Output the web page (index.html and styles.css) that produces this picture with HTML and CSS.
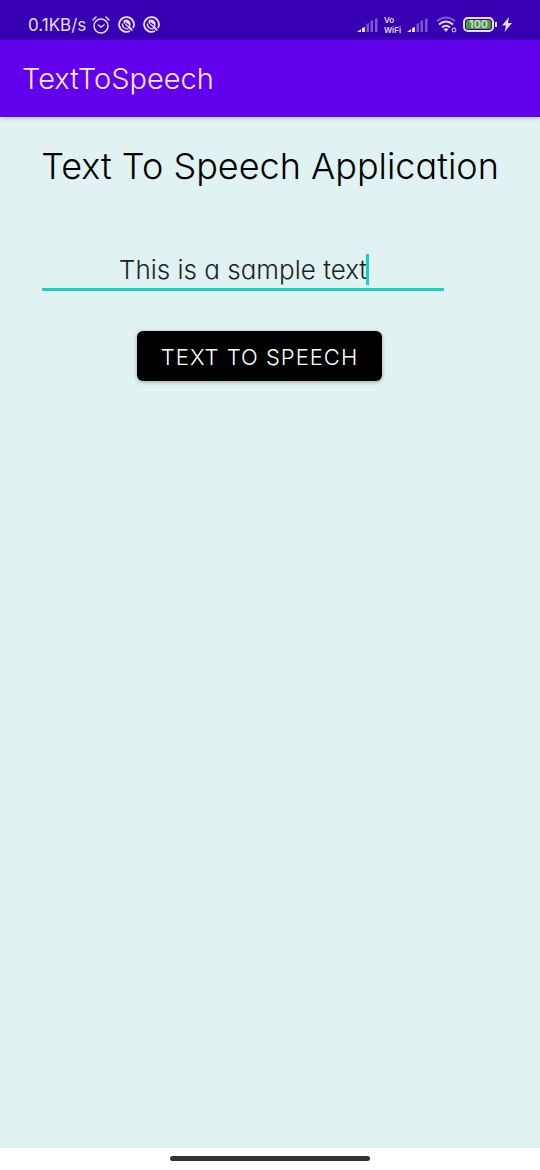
FILE: index.html
```html
<!DOCTYPE html>
<html lang="en">
<head>
<meta charset="utf-8">
<meta name="viewport" content="width=device-width, initial-scale=1">
<title>TextToSpeech</title>
<link rel="stylesheet" href="styles.css">
</head>
<body>
<div class="screen">
  <div class="status-bar">
    <div class="status-group">
      <span class="net-speed">0.1KB/s</span>
      <svg class="icon-alarm" width="18" height="18" viewBox="0 0 18 18" fill="none" stroke="currentColor" stroke-width="1.5" stroke-linecap="round"><circle cx="9" cy="10" r="7"/><path d="M1 4l3-3M17 4l-3-3M6.5 9L9 11l3-2"/></svg>
      <svg class="icon-app" width="17" height="17" viewBox="0 0 17 17" fill="none" stroke="currentColor"><path d="M12 15A7.400 7.400 0 1 1 15 12" stroke-width="1.800"/><path d="M5.500 4.500Q8.500 2.500 11.500 5Q13.500 8 12 10.500L15 14L13.500 15L5.500 7Z" fill="currentColor" stroke="none"/><path d="M4.500 7.500Q4 10.500 6.500 12T10.500 12.500" stroke-width="1.400"/><path d="M7 6.500L11 9.500" stroke="#3700b3" stroke-width="1.200"/></svg>
      <svg class="icon-app" width="17" height="17" viewBox="0 0 17 17" fill="none" stroke="currentColor"><path d="M12 15A7.400 7.400 0 1 1 15 12" stroke-width="1.800"/><path d="M5.500 4.500Q8.500 2.500 11.500 5Q13.500 8 12 10.500L15 14L13.500 15L5.500 7Z" fill="currentColor" stroke="none"/><path d="M4.500 7.500Q4 10.500 6.500 12T10.500 12.500" stroke-width="1.400"/><path d="M7 6.500L11 9.500" stroke="#3700b3" stroke-width="1.200"/></svg>
    </div>
    <div class="status-group status-right">
      <svg width="21" height="16" viewBox="0 0 21 16" fill="currentColor"><path d="M0 15l4-3v3zM5 11l3-1v5H5z"/><path opacity=".4" d="M9.500 7l2.500-1v9H9.500zM13.500 4L16 3v12h-2.500zM18 2l2.500-1v14H18z"/></svg>
      <span class="vowifi"><span>Vo</span><span>WiFi</span></span>
      <svg width="21" height="16" viewBox="0 0 21 16" fill="currentColor"><path d="M0 15l4-3v3zM5 11l3-1v5H5z"/><path opacity=".4" d="M9.500 7l2.500-1v9H9.500zM13.500 4L16 3v12h-2.500zM18 2l2.500-1v14H18z"/></svg>
      <svg class="icon-wifi" width="21" height="17" viewBox="0 0 21 17" fill="none" stroke="currentColor" stroke-width="2"><path opacity=".4" d="M1 5Q10 -2 19 5"/><path d="M3 8.500Q10 2.500 17 8.500M6 11.500Q10 8 14 11.500"/><path d="M7.500 13Q10 11.500 12.500 13L10 16Z" fill="currentColor" stroke="none"/><circle cx="18" cy="14" r="1.800" stroke-width="1.200" opacity=".8"/></svg>
      <span class="battery"><span class="battery-level">100</span></span>
      <svg class="icon-bolt" width="10" height="15" viewBox="0 0 10 15" fill="currentColor"><path d="M7 0L0 8.500h4L2.500 15L10 6H6z"/></svg>
    </div>
  </div>
  <header class="app-bar">TextToSpeech</header>
  <main class="content">
    <h1 class="title">Text To Speech Application</h1>
    <div class="field">
      <input class="field-input" type="text" value="This is a sample text" aria-label="Text to speak">
      <span class="caret"></span>
    </div>
    <button class="speak-button" type="button">TEXT TO SPEECH</button>
  </main>
  <div class="nav-bar"><div class="nav-handle"></div></div>
</div>
</body>
</html>
```
FILE: styles.css
```css
* {
  box-sizing: border-box;
}

body {
  margin: 0;
  font-family: Inter, "Noto Sans", sans-serif;
  font-weight: 300;
  font-feature-settings: "cv11";
}

.screen {
  display: flex;
  flex-direction: column;
  min-height: 100vh;
  background: #e0f2f1;
}

.status-bar {
  display: flex;
  justify-content: space-between;
  align-items: center;
  height: 40px;
  padding: 9px 28px 0;
  background: #3700b3;
  color: #e9dcff;
}

.status-group {
  display: flex;
  align-items: center;
  gap: 8px;
}

.net-speed {
  font-size: 17px;
  line-height: 20px;
  font-weight: 400;
  margin-right: -2px;
}

.status-right {
  gap: 6px;
}

.vowifi {
  display: flex;
  flex-direction: column;
  font-size: 8px;
  line-height: 10px;
  font-weight: 600;
}

.icon-wifi {
  margin-left: 2px;
}

.battery {
  position: relative;
  width: 31px;
  height: 15px;
  margin-right: 2px;
  padding: 1px;
  border: 2px solid #e9dcff;
  border-radius: 5px;
}

.battery::after {
  content: "";
  position: absolute;
  top: 3px;
  right: -5px;
  width: 2px;
  height: 5px;
  background: #e9dcff;
}

.battery-level {
  display: block;
  height: 9px;
  border-radius: 2px;
  background: #43a02d;
  font-size: 11px;
  line-height: 9px;
  font-weight: 500;
  text-align: center;
}

.app-bar {
  position: relative;
  padding: 22px;
  background: #6200ee;
  color: #f3eaff;
  font-size: 29px;
  line-height: 33px;
  box-shadow: 0 1px 5px rgba(0, 0, 0, 0.2);
}

.content {
  display: flex;
  flex: 1;
  flex-direction: column;
  align-items: center;
  padding: 28px 20px;
}

.title {
  margin: 0;
  color: #000;
  font-size: 36px;
  line-height: 42px;
  font-weight: 300;
  white-space: nowrap;
}

.field {
  position: relative;
  align-self: stretch;
  margin: 62px 76px 0 22px;
}

.field-input {
  display: block;
  width: 100%;
  height: 42px;
  padding: 2px 0 0;
  border: 0;
  border-bottom: 3px solid #16d1bf;
  outline: 0;
  background: transparent;
  color: #1b2424;
  font: inherit;
  font-feature-settings: inherit;
  font-size: 26px;
  text-align: center;
}

.caret {
  position: absolute;
  top: 5px;
  left: calc(50% + 123px);
  width: 3px;
  height: 31px;
  background: #16d1bf;
}

.speak-button {
  margin: 40px 21px 0 0;
  padding: 13px 24px 11px;
  border: 0;
  border-radius: 6px;
  background: #000;
  color: #fff;
  font: inherit;
  font-size: 22px;
  line-height: 26px;
  letter-spacing: 1px;
  box-shadow: 0 1px 4px rgba(0, 0, 0, 0.3);
}

.nav-bar {
  display: flex;
  justify-content: center;
  padding: 8px 0 9px;
  background: #fff;
}

.nav-handle {
  width: 37%;
  height: 5px;
  border-radius: 3px;
  background: #333;
}
```
